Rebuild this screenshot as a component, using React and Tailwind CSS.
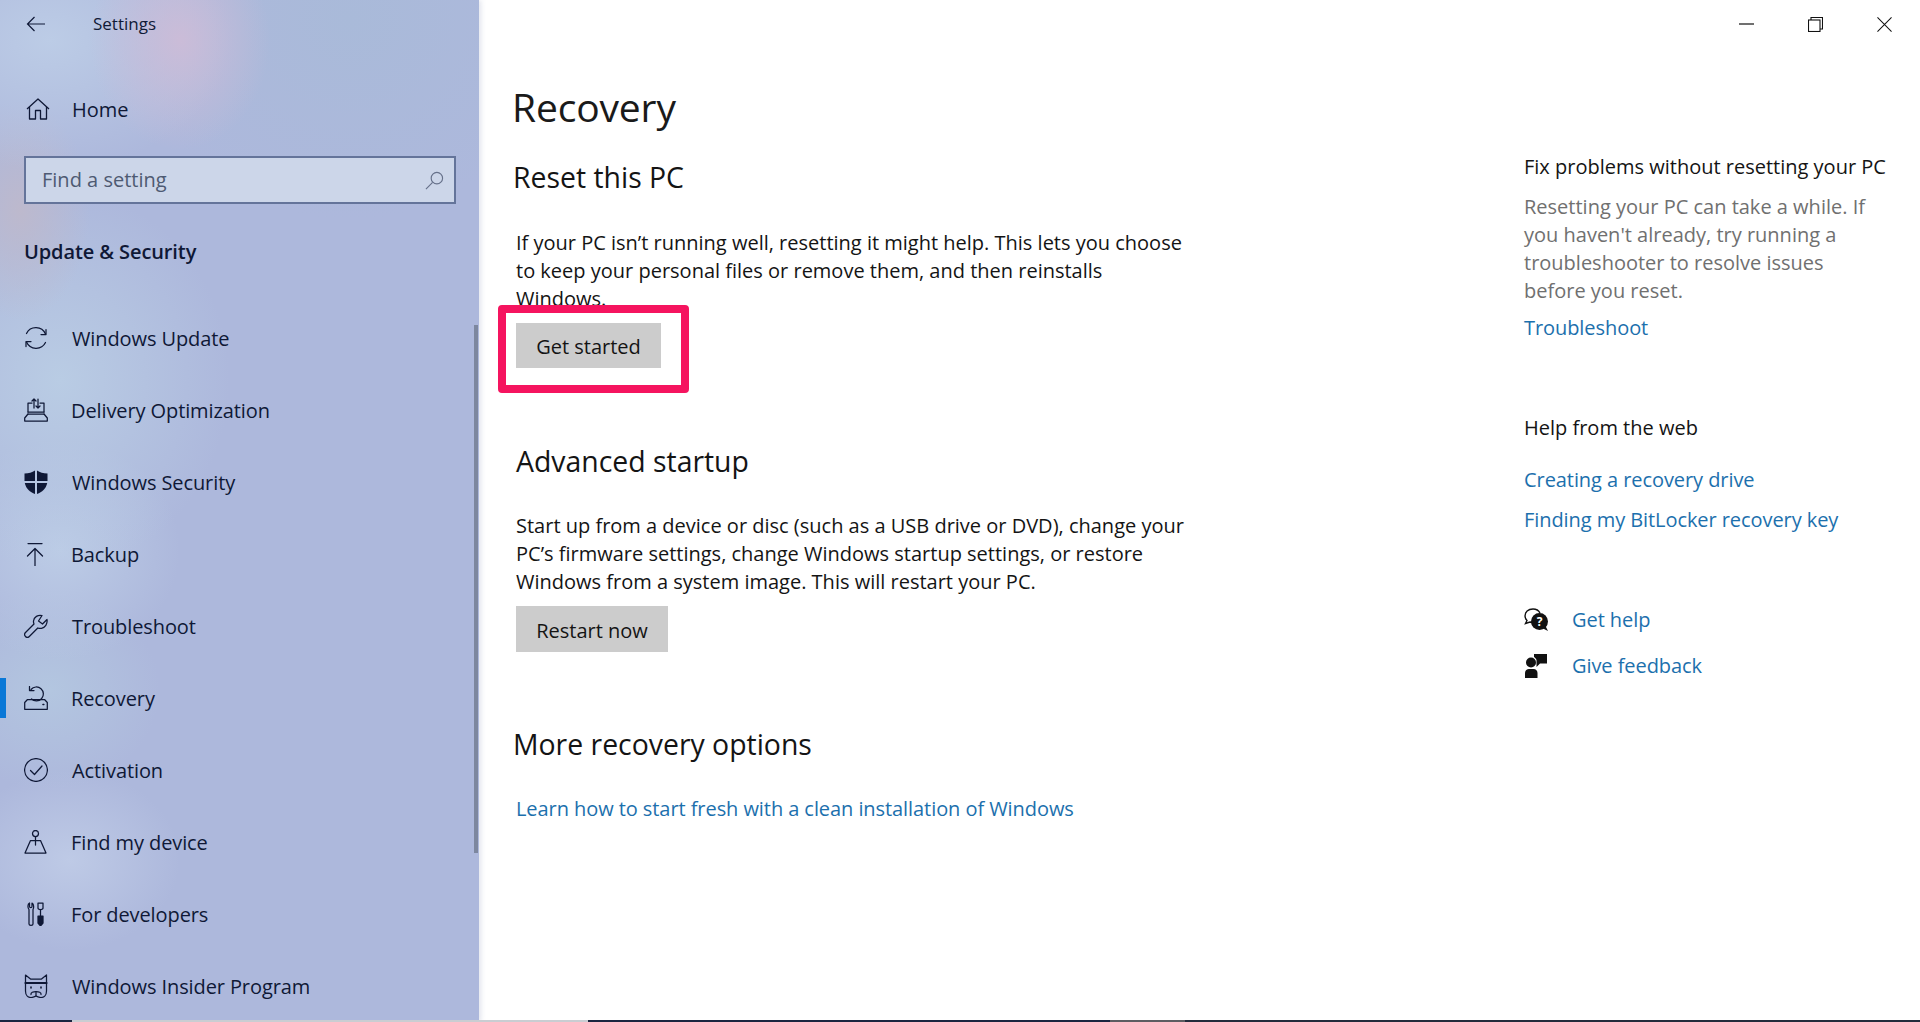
import React from "react";

const S = ({ children, className = "", fill = "none", vb = "0 0 24 24" }) => (
  <svg viewBox={vb} className={className} fill={fill} stroke={fill === "none" ? "currentColor" : "none"} strokeWidth="1.25" strokeLinecap="round" strokeLinejoin="round">
    {children}
  </svg>
);

const icons = {
  update: (
    <S className="w-6 h-6">
      <path d="M2.5 7.5 A10.5 10.5 0 0 1 21.5 8" />
      <path d="M22 3.5 V8.5 H17" />
      <path d="M21.5 16.5 A10.5 10.5 0 0 1 2.5 16" />
      <path d="M2 20.5 V15.5 H7" />
    </S>
  ),
  delivery: (
    <S className="w-6 h-6">
      <path d="M4 14 V5 H8" />
      <path d="M20 14 V5 H16" />
      <path d="M10 10 V1 M8 3 L10 1 L12 3" />
      <path d="M14 1 V10 M12 8 L14 10 L16 8" />
      <path d="M4 14 H20" />
      <path d="M4 16 L0.7 20 V23 H23.3 V20 L20 16" />
      <path d="M4 16 H20" />
    </S>
  ),
  shield: (
    <svg viewBox="0 0 24 24" className="w-6 h-6" fill="currentColor">
      <path d="M11 0.5 V11 H0.5 V3.5 C5 3.5 8 2.5 11 0.5 Z" />
      <path d="M13 0.5 C16 2.5 19 3.5 23.5 3.5 V11 H13 Z" />
      <path d="M0.8 13 H11 V24 C6 22 2 19 0.8 13 Z" />
      <path d="M13 13 H23.2 C22 19 18 22 13 24 Z" />
    </svg>
  ),
  backup: (
    <S className="w-6 h-6">
      <path d="M5 1.5 H19" />
      <path d="M12 24 V6.5 M4.5 14 L12 6.5 L19.5 14" />
    </S>
  ),
  wrench: (
    <S className="w-6 h-6">
      <path d="M23 5.5 L18.5 10 L14.5 7 L18 1.5 C14 0.5 10 3 9.5 7 C9.4 8.2 9.7 9.3 10 10 L1.5 18.5 C0.3 19.8 0.5 21.5 1.5 22.5 C2.7 23.7 4.3 23.5 5.3 22.5 L13.8 14 C15 14.5 16.2 14.6 17.5 14.3 C21 13.5 23.7 10 23 5.5 Z" />
    </S>
  ),
  recovery: (
    <S className="w-6 h-6">
      <path d="M7 3.5 A7 7 0 1 1 7.5 13" />
      <path d="M5.5 0.5 V4.5 H10" />
      <path d="M3.5 13.5 H20.5 L23.3 16.5 V23.3 H0.7 V16.5 Z" />
      <path d="M19 18.5 H19.8" strokeWidth="1.6" />
    </S>
  ),
  activation: (
    <S className="w-6 h-6">
      <circle cx="12" cy="12" r="11.4" />
      <path d="M6.5 12.5 L10.5 16.5 L18 8" />
    </S>
  ),
  find: (
    <S className="w-6 h-6">
      <circle cx="11.5" cy="3.5" r="3" />
      <path d="M11.5 6.5 V15" />
      <path d="M6.5 10.5 H16.5 L22 23 H1 Z" />
    </S>
  ),
  dev: (
    <S className="w-6 h-6">
      <path d="M5.5 1 V4.5 C5.5 6 8 6 8 4.5 V1 C10 2 10 6 9 7.5 V22 C9 23.8 5 23.8 5 22 V7.5 C3.5 6 3.5 2 5.5 1 Z" />
      <path d="M14 1 H19 V6 C19 8 14 8 14 6 Z" />
      <path d="M16.5 8 V14" />
      <path d="M14 14 H19 V21 L16.5 24 L14 21 Z" fill="currentColor" />
    </S>
  ),
  insider: (
    <S className="w-6 h-6">
      <path d="M1.5 9 V1 L6.5 5 H17.5 L22.5 1 V9 V17 C22.5 21 20 23.5 17 23.5 C15 23.5 13 22.5 12 22 C11 22.5 9 23.5 7 23.5 C4 23.5 1.5 21 1.5 17 Z" />
      <path d="M1.5 9 H22.5" strokeWidth="2.2" />
      <path d="M7 13 V14 M17 13 V14" strokeWidth="1.6" />
      <path d="M7 20.5 C6 16.5 18 16.5 17 20.5" />
      <path d="M12 17.5 V22" />
    </S>
  ),
};

const items = [
  ["Windows Update", icons.update, "ml-[24px]", "ml-[24px]"],
  ["Delivery Optimization", icons.delivery, "ml-[24px]", "ml-[23px]"],
  ["Windows Security", icons.shield, "ml-[24px]", "ml-[24px]"],
  ["Backup", icons.backup, "ml-[23px]", "ml-[24px]"],
  ["Troubleshoot", icons.wrench, "ml-[24px]", "ml-[24px]"],
  ["Recovery", icons.recovery, "ml-[24px]", "ml-[23px]"],
  ["Activation", icons.activation, "ml-[24px]", "ml-[24px]"],
  ["Find my device", icons.find, "ml-[24px]", "ml-[23px]"],
  ["For developers", icons.dev, "ml-[24px]", "ml-[23px]"],
  ["Windows Insider Program", icons.insider, "ml-[24px]", "ml-[24px]"],
];

const Link = ({ children, className = "" }) => (
  <div className={`text-[#1c70ad] tracking-[-0.07px] ${className}`}>{children}</div>
);

export default function App() {
  return (
    <div className="relative w-[1920px] h-[1022px] overflow-hidden bg-white flex font-['Open_Sans','Noto_Sans',sans-serif] text-[20px] leading-[28px]">
      {/* Sidebar */}
      <aside className="relative w-[479px] h-full shrink-0 overflow-hidden bg-[#adb8dc] text-[#0f1836] shadow-[2px_0_5px_rgba(190,195,215,0.45)]">
        <div className="absolute inset-0 bg-[radial-gradient(ellipse_90px_110px_at_180px_40px,#cbbcd8_0%,rgba(203,188,216,0)_100%),radial-gradient(ellipse_180px_130px_at_50px_40px,#bccce6_0%,rgba(188,204,230,0)_100%),radial-gradient(ellipse_70px_110px_at_20px_210px,#bdb9cd_0%,rgba(189,185,205,0)_100%),radial-gradient(ellipse_220px_200px_at_350px_20px,#a9bad9_0%,rgba(169,186,217,0)_100%),radial-gradient(ellipse_170px_190px_at_60px_380px,#b9cce4_0%,rgba(185,204,228,0)_100%),radial-gradient(ellipse_120px_110px_at_60px_550px,#bccce6_0%,rgba(188,204,230,0)_100%),radial-gradient(ellipse_110px_100px_at_50px_690px,#b3c6e0_0%,rgba(179,198,224,0)_100%),radial-gradient(ellipse_110px_90px_at_70px_860px,#becae6_0%,rgba(190,202,230,0)_100%)]" />
        <div className="relative">
          <div className="h-[48px] flex items-center">
            <svg viewBox="0 0 20 16" className="ml-[26px] w-[20px] h-[16px]" fill="none" stroke="currentColor" strokeWidth="1.2">
              <path d="M19 8 H1.5 M8.5 1 L1.5 8 L8.5 15" />
            </svg>
            <span className="ml-[47px] text-[17px] text-[#101a36]">Settings</span>
          </div>
          <div className="mt-[31px] h-[60px] flex items-center">
            <svg viewBox="0 0 24 22" className="ml-[26px] w-[24px] h-[22px]" fill="none" stroke="currentColor" strokeWidth="1.3" strokeLinejoin="round">
              <path d="M1 11 L12 1 L23 11" />
              <path d="M3.5 9 V21 H9.5 V12.5 H14.5 V21 H20.5 V9" />
            </svg>
            <span className="ml-[22px] pt-[2px]">Home</span>
          </div>
          <div className="mt-[17px] ml-[24px] w-[432px] h-[48px] border-2 border-[#64749a] bg-[#ccd6e9] flex items-center justify-between pl-[16px] pr-[10px] text-[#4e5a72]">
            <span>Find a setting</span>
            <svg viewBox="0 0 20 20" className="w-[19px] h-[19px]" fill="none" stroke="#66718a" strokeWidth="1.2">
              <circle cx="12.5" cy="7.5" r="6" />
              <path d="M8 12 L1 19" />
            </svg>
          </div>
          <div className="mt-[34px] ml-[24px] font-semibold tracking-[-0.1px]">Update &amp; Security</div>
          <nav className="mt-[36px]">
            {items.map(([label, icon, il, tl]) => (
              <div key={label} className="relative h-[72px] flex items-center">
                {label === "Recovery" && <div className="absolute left-0 top-[16px] w-[6px] h-[40px] bg-[#0a78d7]" />}
                <span className={`${il} w-[24px] h-[24px] flex items-center justify-center`}>{icon}</span>
                <span className={`${tl} pt-[2px] tracking-[-0.1px]`}>{label}</span>
              </div>
            ))}
          </nav>
        </div>
        <div className="absolute left-[474px] top-[325px] w-[4px] h-[528px] bg-[#7d879f]" />
      </aside>

      {/* Main */}
      <main className="flex-1 pl-[33px] text-[#141414]">
        <h1 className="mt-[80px] h-[54px] leading-[54px] text-[39px] font-normal tracking-[-0.15px] text-[#1a1a1a]">Recovery</h1>
        <h2 className="mt-[24px] ml-[1px] text-[28.4px] leading-[38px]">Reset this PC</h2>
        <p className="mt-[33px] ml-[4px]">
          If your PC isn’t running well, resetting it might help. This lets you choose<br />
          to keep your personal files or remove them, and then reinstalls<br />
          Windows.
        </p>
        <div className="relative ml-[4px] mt-[10px] w-[145px] h-[45px] bg-[#cccccc] flex items-center justify-center pt-[3px]">
          Get started
          <div className="absolute left-[-18px] top-[-18px] w-[191px] h-[88px] border-[8px] border-[#f5145f] rounded-[4px]" />
        </div>
        <h2 className="mt-[74px] ml-[4px] text-[28.4px] leading-[38px]">Advanced startup</h2>
        <p className="mt-[32px] ml-[4px]">
          Start up from a device or disc (such as a USB drive or DVD), change your<br />
          PC’s firmware settings, change Windows startup settings, or restore<br />
          Windows from a system image. This will restart your PC.
        </p>
        <div className="ml-[4px] mt-[10px] w-[152px] h-[46px] bg-[#cccccc] flex items-center justify-center pt-[3px]">Restart now</div>
        <h2 className="mt-[73px] ml-[1px] text-[28.4px] leading-[38px]">More recovery options</h2>
        <Link className="mt-[32px] ml-[4px]">Learn how to start fresh with a clean installation of Windows</Link>
      </main>

      {/* Right column */}
      <section className="absolute left-[1524px] top-0 w-[396px]">
        <div className="flex justify-end h-[48px] items-center text-[#111]">
          <svg viewBox="0 0 15 2" className="mr-[54px] w-[15px] h-[2px]"><path d="M0 1 H15" stroke="currentColor" strokeWidth="1.2" /></svg>
          <svg viewBox="0 0 15 15" className="mr-[54px] w-[15px] h-[15px]" fill="none" stroke="currentColor" strokeWidth="1.1">
            <rect x="0.5" y="3" width="11.5" height="11.5" />
            <path d="M3 3 V0.5 H14.5 V12 H12" />
          </svg>
          <svg viewBox="0 0 16 16" className="mr-[28px] w-[15px] h-[15px]" fill="none" stroke="currentColor" strokeWidth="1.1">
            <path d="M0.5 0.5 L15.5 15.5 M15.5 0.5 L0.5 15.5" />
          </svg>
        </div>
        <div className="mt-[105px] text-[#141414]">Fix problems without resetting your PC</div>
        <p className="mt-[12px] text-[#707070]">
          Resetting your PC can take a while. If<br />
          you haven't already, try running a<br />
          troubleshooter to resolve issues<br />
          before you reset.
        </p>
        <Link className="mt-[9px]">Troubleshoot</Link>
        <div className="mt-[72px] text-[#141414]">Help from the web</div>
        <Link className="mt-[24px]">Creating a recovery drive</Link>
        <Link className="mt-[12px]">Finding my BitLocker recovery key</Link>
        <div className="mt-[72px] flex items-center h-[28px]">
          <svg viewBox="0 0 24 24" className="w-[24px] h-[24px]">
            <path d="M9 1 C4 1 1 4 1 8 C1 10 2 11.5 3 12.5 L1.5 15.5 L6 14 C7 14.4 8 14.5 9 14.5" fill="none" stroke="#111" strokeWidth="1.4" />
            <path d="M9 1 C12 1 15 3 16 5" fill="none" stroke="#111" strokeWidth="1.4" />
            <circle cx="15.5" cy="13.5" r="8.5" fill="#111" />
            <path d="M18 20 L24 23 L21 17 Z" fill="#111" />
            <text x="15.5" y="18" textAnchor="middle" fontSize="12" fontWeight="700" fill="#fff">?</text>
          </svg>
          <Link className="ml-[24px]">Get help</Link>
        </div>
        <div className="mt-[18px] flex items-center h-[28px]">
          <svg viewBox="0 0 24 24" className="w-[24px] h-[24px]" fill="#111">
            <path d="M10 0 H23 V9.5 H16 L12.5 13 V6 C12 4.5 11 3.5 10 3 Z" />
            <circle cx="7" cy="8.5" r="5" />
            <path d="M1 24 V19 C1 16.5 3 15 5 15 H9.5 C12 15 13.5 17 13.5 19 V24 Z" />
          </svg>
          <Link className="ml-[24px]">Give feedback</Link>
        </div>
      </section>

      {/* Bottom edge strip */}
      <div className="absolute left-0 right-0 bottom-0 h-[2px] flex">
        <div className="w-[72px] bg-[#1a2540]" />
        <div className="w-[516px] bg-[#c9cdd2]" />
        <div className="w-[522px] bg-[#1a2540]" />
        <div className="w-[75px] bg-[#5d5d62]" />
        <div className="flex-1 bg-[#232c3c]" />
      </div>
    </div>
  );
}
